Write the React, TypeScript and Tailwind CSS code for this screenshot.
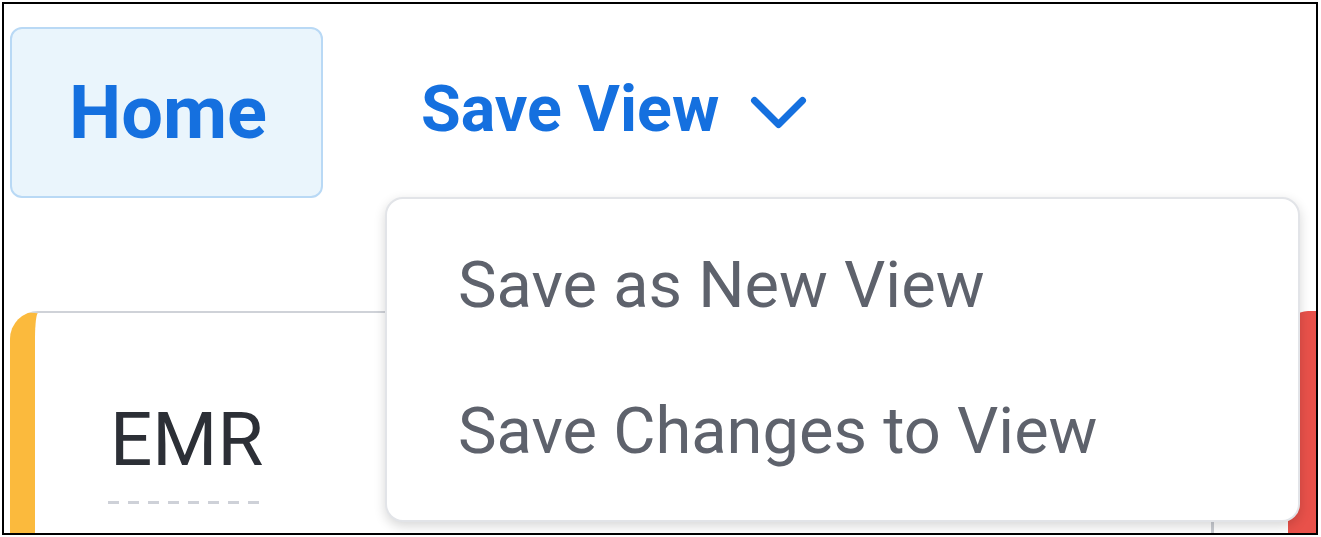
import React from "react";

export default function App() {
  return (
    <div className="w-[1321px] h-[537px] bg-white p-[2px] font-['Roboto',sans-serif]">
      <div className="relative w-[1316px] h-[533px] border-2 border-black overflow-hidden bg-white">
        {/* top row */}
        <div className="flex items-start pt-[23px] pl-[6px]">
          <div className="w-[313px] h-[171px] flex items-center justify-center rounded-[12px] border-2 border-[#B9D9F5] bg-[#EAF5FC] pl-[3px] text-[74px] leading-none font-bold text-[#1570DF]">
            Home
          </div>
          <div className="ml-[98px] mt-[50px] flex items-start">
            <span className="text-[64.5px] leading-none font-bold text-[#1570DF]">Save View</span>
            <svg width="60" height="36" viewBox="0 0 60 36" className="ml-[30px] mt-[17px]">
              <polyline
                points="5.5,6.5 29.5,30.5 53.5,6.5"
                fill="none"
                stroke="#1570DF"
                strokeWidth="7"
                strokeLinecap="round"
                strokeLinejoin="round"
              />
            </svg>
          </div>
        </div>

        {/* cards row */}
        <div className="flex mt-[113px] pl-[6px]">
          <div className="relative shrink-0 w-[1263px] h-[260px] bg-white border-l-[25px] border-l-[#FBBA3D] border-t-2 border-t-[#CFD2D8] rounded-tl-[28px] pt-[90px] pl-[75px]">
            <div className="inline-flex flex-col">
              <span className="text-[74.5px] leading-none text-[#2C2F36]">EMR</span>
              <div className="mt-[23px] -ml-[2px] w-[156px] h-[3px] bg-[repeating-linear-gradient(to_right,#CED1D8_0_11px,transparent_11px_20px)]" />
            </div>
            <div className="absolute left-[1176px] top-[208px] w-[3px] h-[12px] bg-[#C9CCD2]" />
          </div>
          <div className="shrink-0 ml-[15px] w-[200px] h-[260px] bg-[#E8514A] rounded-tl-[20px]" />
        </div>

        {/* dropdown menu */}
        <div className="absolute left-[381px] top-[193px] w-[915px] h-[325px] bg-white border-2 border-[#E2E4E8] rounded-[18px] shadow-[0_4px_12px_rgba(0,0,0,0.16)] pt-[54px] pl-[71px]">
          <div className="flex flex-col gap-[81px]">
            <span className="text-[65px] leading-none text-[#5E626C]">Save as New View</span>
            <span className="text-[65px] leading-none text-[#5E626C]">Save Changes to View</span>
          </div>
        </div>
      </div>
    </div>
  );
}
